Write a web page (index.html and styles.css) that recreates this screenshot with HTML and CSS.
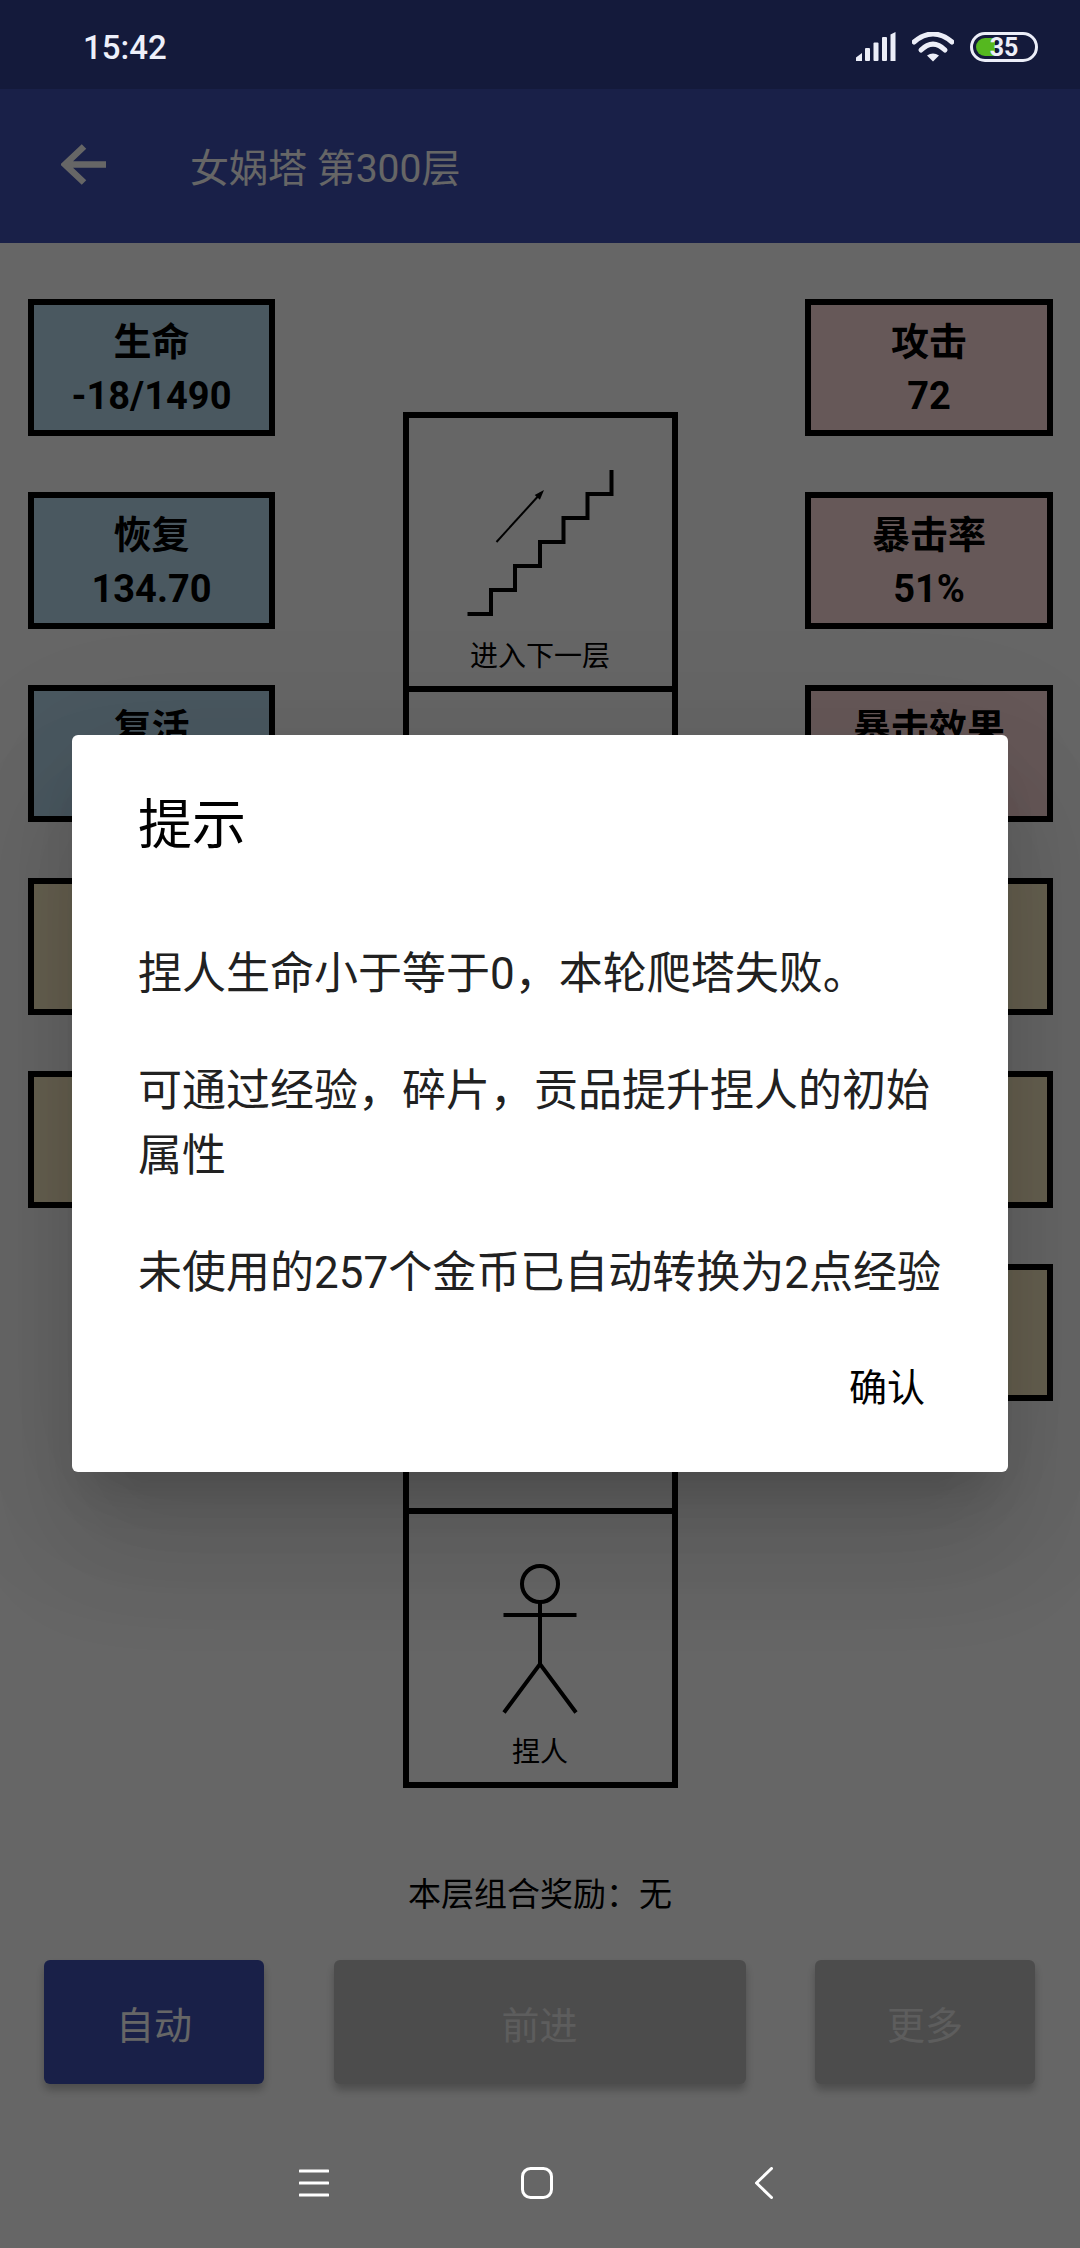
FILE: index.html
```html
<!DOCTYPE html>
<html lang="zh-CN">
<head>
<meta charset="utf-8">
<title>女娲塔</title>
<link rel="stylesheet" href="styles.css">
</head>
<body>
<div class="app">
  <div class="status">
    <span class="time">15:42</span>
    <div class="status-icons">
      <svg class="signal" width="40" height="30" viewBox="0 0 40 30" aria-hidden="true">
        <path d="M0 29V25.500L6 21V29Z"/>
        <rect x="9" y="16" width="5" height="13" rx="1"/>
        <rect x="17.500" y="10.500" width="5" height="18.500" rx="1"/>
        <rect x="26" y="5" width="5" height="24" rx="1"/>
        <path d="M34.500 2.500L39.500 0V29H34.500Z"/>
      </svg>
      <svg class="wifi" width="42" height="30" viewBox="0 0 42 30" aria-hidden="true">
        <path class="wifi-arc" d="M2 10Q21 -6 40 10"/>
        <path class="wifi-arc" d="M9 18Q21 6 33 18"/>
        <path d="M15 23.500Q21 19.500 27 23.500L21 29.500Z"/>
      </svg>
      <div class="battery"><span class="battery-fill"></span><span class="battery-text">35</span></div>
    </div>
  </div>

  <header class="appbar">
    <svg class="back-arrow" width="46" height="42" viewBox="0 0 46 42" aria-hidden="true">
      <path d="M45 20.500H4M23 2.500L4 20.500L23 38.500"/>
    </svg>
    <h1 class="appbar-title">女娲塔 第300层</h1>
  </header>

  <main class="stage">
    <section class="stats">
      <div class="stat stat-blue"><div>生命</div><div>-18/1490</div></div>
      <div class="stat stat-blue"><div>恢复</div><div>134.70</div></div>
      <div class="stat stat-blue"><div>复活</div></div>
      <div class="stat stat-sand"></div>
      <div class="stat stat-sand"></div>
    </section>

    <section class="tower">
      <div class="cell">
        <svg class="cell-art" width="150" height="150" viewBox="0 0 150 150" aria-hidden="true">
          <path class="stroke-4" d="M2.500 146H26V122H50V98H75V74H98.500V50H122.500V26H146.500V2"/>
          <path class="stroke-2" d="M31.500 74L76 25"/>
          <path d="M79 22L69.700 27L74.900 31.800Z"/>
        </svg>
        <span class="cell-label">进入下一层</span>
      </div>
      <div class="cell"></div>
      <div class="cell"></div>
      <div class="cell"></div>
      <div class="cell">
        <svg class="cell-art" width="150" height="150" viewBox="0 0 150 150" aria-hidden="true">
          <circle class="stroke-4" cx="75" cy="20" r="18"/>
          <path class="stroke-4" d="M75 38V100M38.500 51H111.500M39 148.500L75 100L111 148.500"/>
        </svg>
        <span class="cell-label">捏人</span>
      </div>
    </section>

    <section class="stats">
      <div class="stat stat-red"><div>攻击</div><div>72</div></div>
      <div class="stat stat-red"><div>暴击率</div><div>51%</div></div>
      <div class="stat stat-red"><div>暴击效果</div></div>
      <div class="stat stat-sand"></div>
      <div class="stat stat-sand"></div>
      <div class="stat stat-sand"></div>
    </section>
  </main>

  <p class="reward">本层组合奖励：无</p>

  <div class="actions">
    <button class="action action-primary" type="button">自动</button>
    <button class="action action-wide" type="button">前进</button>
    <button class="action" type="button">更多</button>
  </div>

  <nav class="navbar">
    <svg width="30" height="32" viewBox="0 0 30 32" aria-hidden="true">
      <path d="M1 4H29M1 16H29M1 28H29"/>
    </svg>
    <svg width="32" height="32" viewBox="0 0 32 32" aria-hidden="true">
      <rect x="1.500" y="1.500" width="29" height="29" rx="8"/>
    </svg>
    <svg width="18" height="32" viewBox="0 0 18 32" aria-hidden="true">
      <path d="M16.500 1.500L1.500 16L16.500 30.500"/>
    </svg>
  </nav>

  <div class="scrim"></div>

  <div class="dialog" role="dialog">
    <h2 class="dialog-title">提示</h2>
    <div class="dialog-body">
      <p>捏人生命小于等于0，本轮爬塔失败。</p>
      <p>可通过经验，碎片，贡品提升捏人的初始属性</p>
      <p>未使用的257个金币已自动转换为2点经验</p>
    </div>
    <div class="dialog-actions">
      <button class="dialog-button" type="button">确认</button>
    </div>
  </div>
</div>
</body>
</html>
```

FILE: styles.css
```css
* {
  box-sizing: border-box;
}

html,
body {
  margin: 0;
  padding: 0;
}

body {
  font-family: Roboto, "Noto Sans CJK SC", sans-serif;
  background: #fff;
}

.app {
  position: relative;
  width: 1080px;
  height: 2248px;
  overflow: hidden;
  background: #fff;
  display: flex;
  flex-direction: column;
}

/* status bar */
.status {
  position: relative;
  z-index: 2;
  height: 89px;
  flex: none;
  background: #141a3b;
  color: #eef0fa;
  display: flex;
  align-items: center;
  justify-content: space-between;
  padding: 0 42px 0 83px;
}

.time {
  font-size: 33px;
  font-weight: 500;
  line-height: 40px;
  margin-top: 6px;
}

.status-icons {
  display: flex;
  align-items: center;
  gap: 16px;
  margin-top: 5px;
}

.signal,
.wifi {
  fill: #eceef8;
}

.wifi-arc {
  fill: none;
  stroke: #eceef8;
  stroke-width: 5;
  stroke-linecap: round;
}

.battery {
  position: relative;
  width: 68px;
  height: 30px;
  border: 3.500px solid #eceef8;
  border-radius: 15px;
  display: flex;
  align-items: center;
  justify-content: center;
}

.battery-fill {
  position: absolute;
  left: 3px;
  top: 2.500px;
  width: 19px;
  height: 18px;
  background: #55b81f;
  border-radius: 9px 0 0 9px;
}

.battery-text {
  position: relative;
  font-size: 25px;
  font-weight: 700;
  line-height: 23px;
  color: #eceef8;
}

/* app bar */
.appbar {
  height: 154px;
  flex: none;
  background: #3f51b5;
  display: flex;
  align-items: center;
  padding-left: 61px;
}

.back-arrow {
  fill: none;
  stroke: #fff;
  stroke-width: 6.500;
  margin-top: -2px;
}

.appbar-title {
  margin: 5px 0 0 83px;
  font-size: 39px;
  font-weight: 400;
  line-height: 56px;
  color: #fff;
}

/* board */
.stage {
  flex: none;
  display: grid;
  grid-template-columns: 247px 1fr 248px;
  align-items: start;
  padding: 56px 27px 0 28px;
}

.stats {
  display: flex;
  flex-direction: column;
  gap: 56px;
}

.stat {
  height: 137px;
  border: 6px solid #000;
  padding-top: 10px;
  text-align: center;
  color: #000;
  font-size: 38px;
  font-weight: 700;
  line-height: 54px;
}

.stat-blue {
  background: #b9dcf0;
}

.stat-red {
  background: #ffdddd;
}

.stat-sand {
  background: #fff0c8;
}

.tower {
  justify-self: center;
  width: 275px;
  margin-top: 113px;
  display: flex;
  flex-direction: column;
}

.cell {
  height: 280px;
  border: 6px solid #000;
  padding-top: 50px;
  display: flex;
  flex-direction: column;
  align-items: center;
}

.cell + .cell {
  margin-top: -6px;
}

.cell-art {
  flex: none;
  fill: #000;
}

.stroke-4 {
  fill: none;
  stroke: #000;
  stroke-width: 4;
}

.stroke-2 {
  fill: none;
  stroke: #000;
  stroke-width: 2;
}

.cell-label {
  margin-top: 19px;
  font-size: 28px;
  line-height: 40px;
  color: #000;
}

.reward {
  margin: 82px 0 0;
  font-size: 33px;
  line-height: 50px;
  text-align: center;
  color: #000;
}

.actions {
  display: flex;
  justify-content: space-between;
  margin-top: 40px;
  padding: 0 45px 0 44px;
}

.action {
  flex: none;
  width: 220px;
  height: 124px;
  border: 0;
  border-radius: 6px;
  background: #bdbdbd;
  color: #e8e8e8;
  font-family: inherit;
  font-size: 38px;
  box-shadow: 0 6px 9px rgba(0, 0, 0, 0.25);
}

.action-wide {
  width: 412px;
}

.action-primary {
  background: #3f51b5;
  color: #fff;
}

/* navigation bar */
.navbar {
  position: relative;
  z-index: 2;
  display: flex;
  align-items: center;
  gap: 192px;
  margin-top: 83px;
  padding-left: 299px;
}

.navbar svg {
  flex: none;
  fill: none;
  stroke: #fff;
  stroke-width: 3;
  stroke-linecap: round;
  stroke-linejoin: round;
}

.navbar svg:last-child {
  margin-left: 10px;
}

/* modal */
.scrim {
  position: absolute;
  inset: 0;
  z-index: 1;
  background: rgba(0, 0, 0, 0.6);
}

.dialog {
  position: absolute;
  z-index: 2;
  left: 72px;
  top: 735px;
  width: 936px;
  padding: 51px 59px 54px 66px;
  background: #fff;
  border-radius: 6px;
  box-shadow: 0 72px 114px 9px rgba(0, 0, 0, 0.1), 0 27px 138px 24px rgba(0, 0, 0, 0.07), 0 33px 45px -21px rgba(0, 0, 0, 0.16);
}

.dialog-title {
  margin: 0;
  font-size: 54px;
  font-weight: 400;
  line-height: 80px;
  color: #000;
}

.dialog-body {
  margin-top: 76px;
  display: flex;
  flex-direction: column;
  gap: 52px;
  font-size: 44px;
  line-height: 65px;
  color: #212121;
}

.dialog-body p {
  margin: 0;
}

.dialog-actions {
  display: flex;
  justify-content: flex-end;
  margin-top: 52px;
  padding-right: 24px;
}

.dialog-button {
  padding: 0;
  border: 0;
  background: none;
  font-family: inherit;
  font-size: 38px;
  line-height: 60px;
  color: #000;
}
```
